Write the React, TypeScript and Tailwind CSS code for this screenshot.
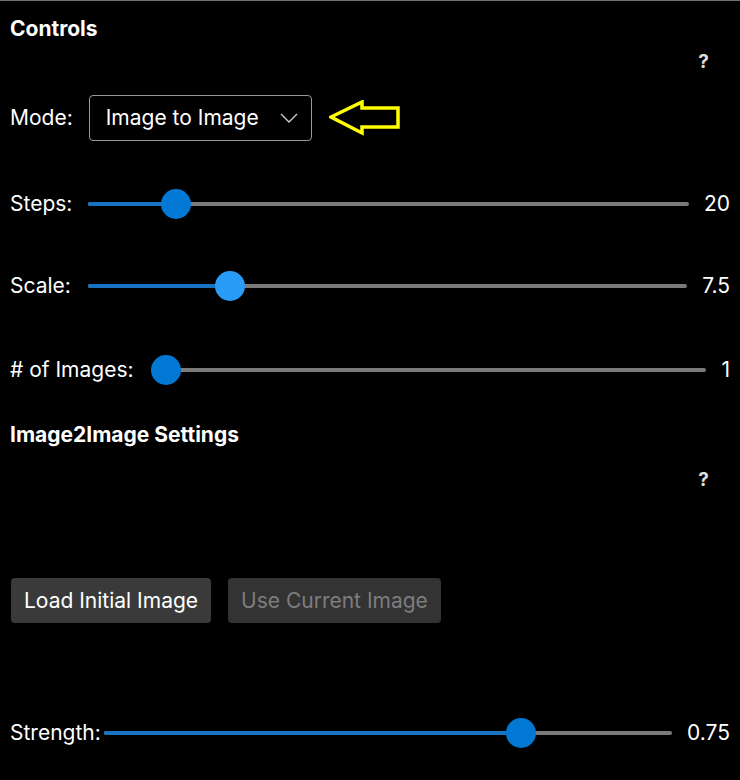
const font = { fontFamily: "Inter, 'Noto Sans', sans-serif" };

type SliderProps = {
  label: string;
  value: string;
  frac: number;
  gapLeft: string;
  mt: string;
  hover?: boolean;
};

const Slider = ({ label, value, frac, gapLeft, mt, hover }: SliderProps) => {
  const center = `calc(15px + ${frac} * (100% - 30px))`;
  return (
    <div className={`flex items-center h-[40px] pl-[10px] pr-[10px] ${mt}`}>
      <span className={`text-[21px] text-white ${gapLeft}`}>{label}</span>
      <div className="relative flex-1 h-[30px] flex items-center">
        <div className="w-full h-[4px] rounded-full bg-[#7a7a7a]" />
        <div
          className="absolute left-0 top-[13px] h-[4px] rounded-full bg-[#1a72c2]"
          style={{ width: center }}
        />
        <div
          className={`absolute top-0 w-[30px] h-[30px] rounded-full ${
            hover ? "bg-[#299cf7]" : "bg-[#0078d4]"
          }`}
          style={{ left: `calc(${center} - 15px)` }}
        />
      </div>
      <span className="text-[21px] text-white ml-[15px] text-right">{value}</span>
    </div>
  );
};

const Help = ({ mt }: { mt: string }) => (
  <div className={`flex justify-end pr-[31px] h-[24px] items-center ${mt}`}>
    <span className="text-[19px] font-bold text-[#dcdcdc]">?</span>
  </div>
);

export default function App() {
  return (
    <div className="w-[740px] h-[780px] bg-black border-t border-[#6e6e6e] overflow-hidden" style={font}>
      <div className="pt-[16px] pl-[10px] text-[21px] leading-[24px] font-bold text-white">Controls</div>
      <Help mt="mt-[9px]" />

      <div className="flex items-center pl-[10px] mt-[21px] h-[46px]">
        <span className="text-[21px] text-white mr-[16px]">Mode:</span>
        <div className="flex items-center justify-between w-[223px] h-[46px] border border-[#999999] rounded-[4px] pl-[16px] pr-[13px]">
          <span className="text-[21px] text-white">Image to Image</span>
          <svg width="18" height="10" viewBox="0 0 18 10">
            <path d="M1 1 L9 9 L17 1" fill="none" stroke="#d0d0d0" strokeWidth="1.3" />
          </svg>
        </div>
        <svg width="72" height="36" viewBox="0 0 72 36" className="ml-[17px]">
          <path
            d="M2 17 L33 2 L33 8 L69 8 L69 27 L33 27 L33 33 Z"
            fill="none"
            stroke="#ffff00"
            strokeWidth="3.5"
            strokeLinejoin="miter"
          />
        </svg>
      </div>

      <Slider label="Steps:" value="20" frac={0.128} gapLeft="mr-[16px]" mt="mt-[43px]" />
      <Slider label="Scale:" value="7.5" frac={0.224} gapLeft="mr-[17px]" mt="mt-[42px]" hover />
      <Slider label="# of Images:" value="1" frac={0} gapLeft="mr-[17px]" mt="mt-[44px]" />

      <div className="mt-[33px] pl-[10px] text-[21px] leading-[24px] font-bold text-white">Image2Image Settings</div>
      <Help mt="mt-[21px]" />

      <div className="flex gap-[17px] pl-[11px] mt-[86px]">
        <button className="h-[45px] px-[13px] rounded-[4px] bg-[#3a3a3a] text-[21px] text-white">
          Load Initial Image
        </button>
        <button className="h-[45px] px-[13px] rounded-[4px] bg-[#333333] text-[21px] text-[#7d7d7d]">
          Use Current Image
        </button>
      </div>

      <Slider label="Strength:" value="0.75" frac={0.748} gapLeft="mr-[3px]" mt="mt-[90px]" />
    </div>
  );
}
